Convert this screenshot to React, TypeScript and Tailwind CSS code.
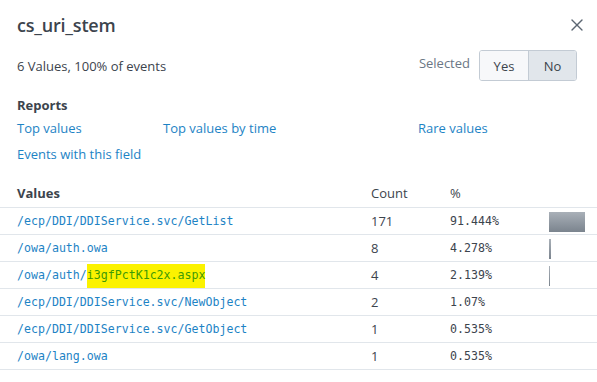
import { X } from "lucide-react";

const rows = [
  { value: "/ecp/DDI/DDIService.svc/GetList", count: "171", pct: "91.444%", bar: 36 },
  { value: "/owa/auth.owa", count: "8", pct: "4.278%", bar: 2 },
  { value: "/owa/auth/", hl: "i3gfPctK1c2x.aspx", count: "4", pct: "2.139%", bar: 1 },
  { value: "/ecp/DDI/DDIService.svc/NewObject", count: "2", pct: "1.07%", bar: 0 },
  { value: "/ecp/DDI/DDIService.svc/GetObject", count: "1", pct: "0.535%", bar: 0 },
  { value: "/owa/lang.owa", count: "1", pct: "0.535%", bar: 0 },
];

const mono = { fontFamily: "'DejaVu Sans Mono', monospace" };

export default function App() {
  return (
    <div
      className="w-[597px] h-[382px] bg-white text-[#3c444d] overflow-hidden"
      style={{ fontFamily: "'Open Sans', 'Liberation Sans', sans-serif" }}
    >
      <div className="h-[50px] flex items-center justify-between pl-[17px] pr-[10px]">
        <h1 className="text-[18px] font-semibold leading-none tracking-[-0.2px]">cs_uri_stem</h1>
        <X size={20} strokeWidth={1.6} className="text-[#5c6773]" />
      </div>

      <div className="h-[31px] flex items-center justify-between pl-[17px] pr-[20px]">
        <span className="text-[13px] mt-[2px]">6 Values, 100% of events</span>
        <div className="flex items-center">
          <span className="text-[13px] text-[#6b7785] mr-[9px] -mt-[3px]">Selected</span>
          <div className="flex h-[31px] border border-[#c3cbd4] rounded-[3px] overflow-hidden text-[13px]">
            <button className="w-[49px] bg-[#f7f8fa] border-r border-[#c3cbd4] pt-[2px]">Yes</button>
            <button className="w-[47px] bg-[#e1e6eb] pt-[2px]">No</button>
          </div>
        </div>
      </div>

      <div className="pl-[17px] mt-[15px]">
        <div className="text-[13px] font-bold leading-[18px]">Reports</div>
        <div className="mt-[4px] grid grid-cols-[146px_255px_1fr] gap-y-[6px] text-[13px] leading-[20px] text-[#1d83c5]">
          <a>Top values</a>
          <a>Top values by time</a>
          <a>Rare values</a>
          <a className="col-span-3">Events with this field</a>
        </div>
      </div>

      <div className="mt-[17px]">
        <div className="h-[27px] flex items-center border-b border-[#e1e6eb] text-[13px]">
          <div className="w-[370px] pl-[17px] font-bold">Values</div>
          <div className="w-[80px] pl-[1px]">Count</div>
          <div className="w-[99px]">%</div>
        </div>
        {rows.map((r, i) => (
          <div key={i} className="h-[27px] flex items-center border-b border-[#e1e6eb] pt-[1px]">
            <div className="w-[370px] pl-[17px] text-[11.6px] text-[#1d83c5] flex items-center h-full" style={mono}>
              {r.value}
              {r.hl && (
                <span className="bg-[#fbf200] text-[#3d9a06] h-[24px] flex items-center">{r.hl}</span>
              )}
            </div>
            <div className="w-[80px] pl-[1px] text-[13px]">{r.count}</div>
            <div className="w-[99px] text-[11.6px]" style={mono}>{r.pct}</div>
            <div className="flex-1 h-[20px] flex">
              {r.bar > 0 && (
                <div
                  className="h-full bg-gradient-to-b from-[#a9b0b8] to-[#7b848e]"
                  style={{ width: r.bar }}
                />
              )}
            </div>
          </div>
        ))}
      </div>
    </div>
  );
}
